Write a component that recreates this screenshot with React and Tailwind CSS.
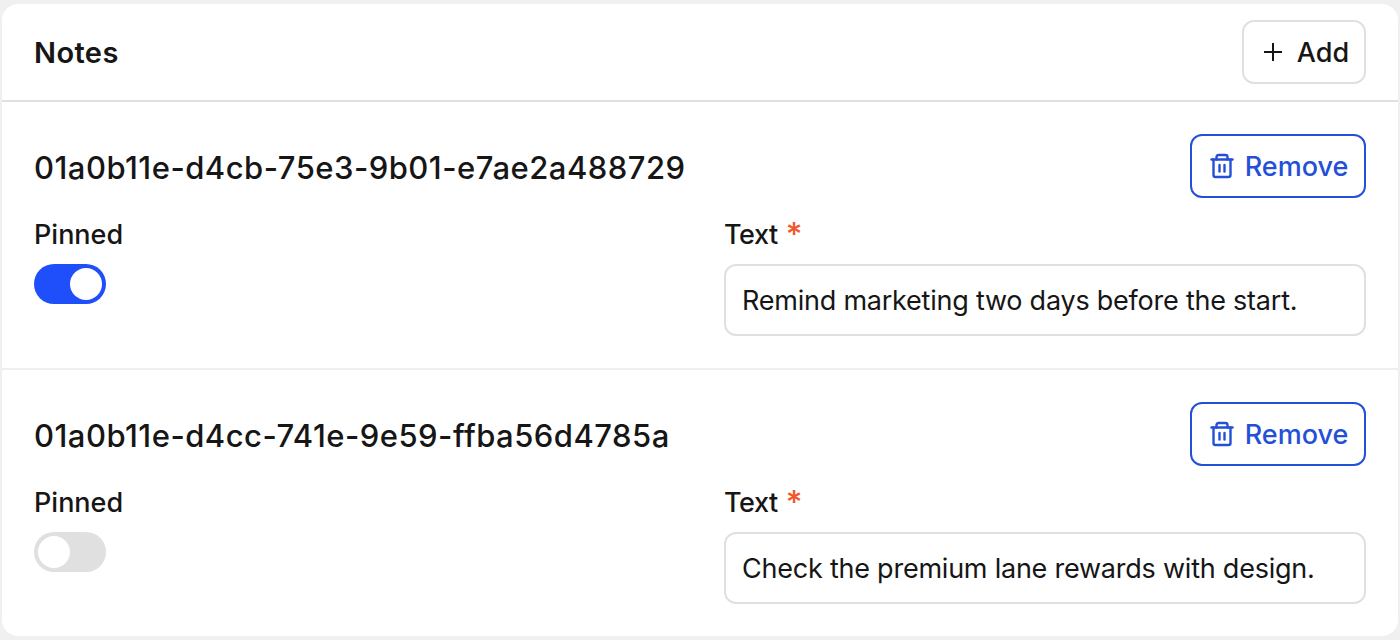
import React from "react";

function TrashIcon() {
  return (
    <svg width="24" height="26" viewBox="0 0 24 26" fill="none" stroke="currentColor" strokeWidth="2.4" strokeLinecap="round" strokeLinejoin="round" className="ml-[1px] mr-[-1px] shrink-0">
      <path d="M1.500 6.500h21" />
      <path d="M6.500 6.500V4c0-1.100.9-2 2-2h7c1.100 0 2 .9 2 2v2.500" />
      <path d="M3.500 6.500v15.500c0 1.100.9 2 2 2h13c1.100 0 2-.9 2-2V6.500" />
      <path d="M9.500 12v6.500" />
      <path d="M14.500 12v6.500" />
    </svg>
  );
}

function Note({ id, pinned, text, last }) {
  return (
    <section className={`flex h-[268px] flex-col px-[32px] pt-[32px] ${last ? "" : "border-b-2 border-[#efefef]"}`}>
      <div className="flex h-[64px] items-center justify-between">
        <h3 className="pt-[3px] text-[31px] leading-[40px] font-[450] tracking-[0.48px] text-[#161616]">{id}</h3>
        <button className="flex h-[64px] w-[176px] items-center justify-center gap-[12px] rounded-[12px] border-2 border-[#2450d8] pl-[1px] text-[27px] font-medium text-[#2450d8]">
          <TrashIcon />
          <span className="pt-[2px]">Remove</span>
        </button>
      </div>
      <div className="mt-[16px] grid grid-cols-2 gap-x-[48px]">
        <div className="flex flex-col items-start">
          <label className="pt-[1px] text-[27px] leading-[40px] font-medium text-[#161616]">Pinned</label>
          <button className={`mt-[9px] flex h-[40px] w-[72px] items-center rounded-full p-[4px] ${pinned ? "justify-end bg-[#1f4ffa]" : "justify-start bg-[#e0e0e0]"}`}>
            <span className="h-[32px] w-[32px] rounded-full bg-white" />
          </button>
        </div>
        <div className="flex flex-col">
          <label className="pt-[1px] text-[27px] leading-[40px] font-medium tracking-[-0.4px] text-[#161616]">
            Text <span className="ml-[1px] align-[-2px] text-[32px] leading-[32px] text-[#f0572d]">*</span>
          </label>
          <div className="mt-[9px] flex h-[72px] items-center rounded-[12px] border-2 border-[#e0e0e0] px-[16px] pt-[2px] text-[27px] font-[390] tracking-[-0.23px] text-[#161616]">
            {text}
          </div>
        </div>
      </div>
    </section>
  );
}

export default function App() {
  return (
    <div className="h-[640px] w-[1400px] overflow-hidden bg-[#f0f0f0] px-[2px] pt-[4px] font-['Inter',sans-serif]">
      <div className="h-[632px] overflow-hidden rounded-[16px] bg-white">
        <header className="flex h-[98px] items-center justify-between border-b-2 border-[#e0e0e0] pr-[32px] pl-[32px]">
          <h2 className="pt-[2px] text-[29px] font-semibold tracking-[0.4px] text-[#161616]">Notes</h2>
          <button className="flex h-[64px] w-[124px] items-center justify-center gap-[14px] rounded-[12px] border-2 border-[#e0e0e0] pl-[4px] text-[27px] font-medium text-[#161616]">
            <svg width="20" height="20" viewBox="0 0 20 20" fill="none" stroke="currentColor" strokeWidth="2" className="shrink-0">
              <path d="M10 1v18M1 10h18" />
            </svg>
            <span className="pt-[2px]">Add</span>
          </button>
        </header>
        <Note id="01a0b11e-d4cb-75e3-9b01-e7ae2a488729" pinned text="Remind marketing two days before the start." />
        <Note id="01a0b11e-d4cc-741e-9e59-ffba56d4785a" pinned={false} text="Check the premium lane rewards with design." last />
      </div>
    </div>
  );
}
